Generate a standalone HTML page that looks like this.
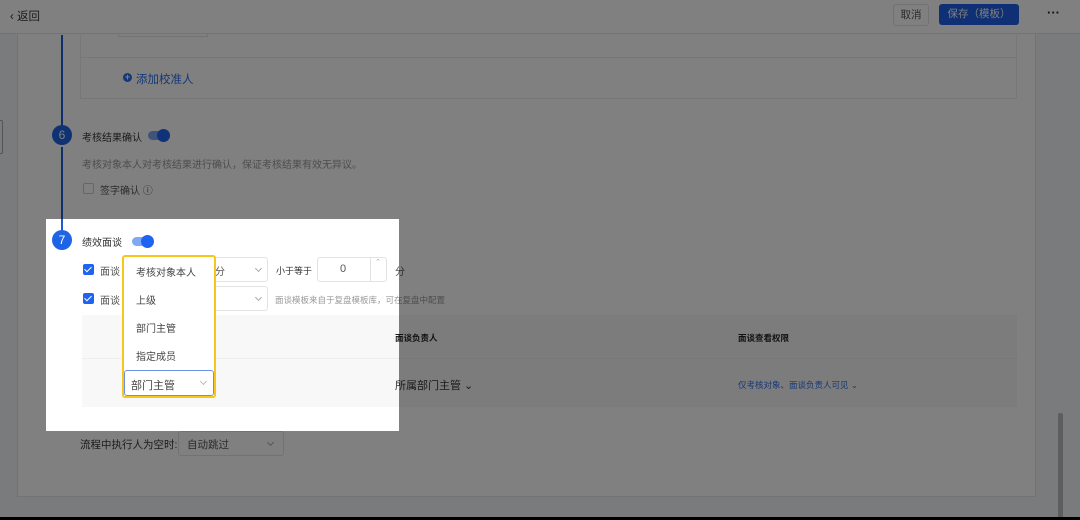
<!DOCTYPE html>
<html><head><meta charset="utf-8"><style>
*{box-sizing:border-box;margin:0;padding:0}
body{width:1080px;height:520px;overflow:hidden;background:#7a7b7c;font-family:"Liberation Sans","Noto Sans CJK SC",sans-serif;font-size:10px;position:relative;color:#1a1a1a}
.a{position:absolute;white-space:nowrap}
.chev{width:5px;height:5px;border-style:solid;border-width:0 1px 1px 0;transform:rotate(45deg)}
.tg{width:20px;height:9px;border-radius:5px}
.tg i{position:absolute;right:-2px;top:-2px;width:13px;height:13px;border-radius:50%}
.cbx{width:11px;height:11px;border-radius:2px}
.cbx:after{content:"";position:absolute;left:3px;top:1px;width:3px;height:6px;border-style:solid;border-color:inherit;border-width:0 1.5px 1.5px 0;transform:rotate(45deg)}
.circ{width:20px;height:20px;border-radius:50%;text-align:center;line-height:20px;font-size:12px}
</style></head><body>
<div class="a" style="left:0;top:0;width:1080px;height:34px;background:#808080;border-bottom:1px solid #737373"></div>
<div class="a" style="left:10px;top:8px;font-size:11.5px;color:#1a1a1a">‹ 返回</div>
<div class="a" style="left:893px;top:4px;width:36px;height:22px;border:1px solid #727272;border-radius:3px;text-align:center;line-height:20px;color:#2b2b2b;font-size:10.5px">取消</div>
<div class="a" style="left:939px;top:4px;width:80px;height:21px;background:#0f3074;border-radius:3px;color:#808080;text-align:center;line-height:21px;font-size:10.5px">保存（模板）</div>
<div class="a" style="left:1047px;top:5px;font-size:13px;font-weight:bold;color:#111">···</div>
<div class="a" style="left:17px;top:34px;width:1019px;height:463px;background:#808080;border:1px solid #737373;border-top:none"></div>
<div class="a" style="left:0;top:120px;width:3px;height:34px;border:1px solid #555;border-left:none;border-radius:0 2px 2px 0"></div>
<div class="a" style="left:1058px;top:413px;width:5px;height:107px;background:#5e5e5e;border-radius:2px"></div>
<div class="a" style="left:61px;top:35px;width:2px;height:92px;background:#0e2e6c"></div>
<div class="a" style="left:61px;top:147px;width:2px;height:72px;background:#0e2e6c"></div>
<div class="a" style="left:80px;top:35px;width:937px;height:64px;border:1px solid #777;border-top:none"></div>
<div class="a" style="left:80px;top:57px;width:937px;height:1px;background:#777"></div>
<div class="a" style="left:118px;top:34px;width:90px;height:3px;border:1px solid #727272;border-top:none"></div>
<div class="a" style="left:123px;top:73px;width:9px;height:9px;border-radius:50%;background:#153778;color:#808080;font-size:9px;line-height:9px;text-align:center;font-weight:bold">+</div>
<div class="a" style="left:136px;top:71px;color:#153778;font-size:11.5px">添加校准人</div>
<div class="a circ" style="left:52px;top:125px;background:#0f3273;color:#808080">6</div>
<div class="a" style="left:82px;top:129px">考核结果确认</div>
<div class="a tg" style="left:148px;top:131px;background:#40547b"><i style="background:#0f3278"></i></div>
<div class="a" style="left:82px;top:156px;color:#4d4d4d">考核对象本人对考核结果进行确认，保证考核结果有效无异议。</div>
<div class="a" style="left:83px;top:183px;width:11px;height:11px;border:1px solid #666;border-radius:2px"></div>
<div class="a" style="left:100px;top:182px;color:#2b2b2b">签字确认 ⓘ</div>
<div class="a" style="left:399px;top:315px;width:618px;height:92px;background:#7c7c7c"></div>
<div class="a" style="left:399px;top:358px;width:618px;height:1px;background:#777"></div>
<div class="a" style="left:738px;top:332px;font-size:8.5px;font-weight:bold;color:#111">面谈查看权限</div>
<div class="a" style="left:738px;top:379px;font-size:8.5px;color:#153778">仅考核对象、面谈负责人可见 ⌄</div>
<div class="a" style="left:80px;top:437px;color:#1a1a1a;font-size:10.5px">流程中执行人为空时:</div>
<div class="a" style="left:178px;top:431px;width:106px;height:25px;border:1px solid #727272;border-radius:3px"></div>
<div class="a" style="left:187px;top:437px;color:#2b2b2b;font-size:10.5px">自动跳过</div>
<div class="a chev" style="left:268px;top:440px;border-color:#555"></div>
<!-- dim copies of text crossing the panel edge -->
<div class="a" style="left:395px;top:263px;color:#2b2b2b">分</div>
<div class="a" style="left:275px;top:294px;color:#4d4d4d;font-size:8.5px">面谈模板来自于复盘模板库，可在复盘中配置</div>
<div class="a" style="left:395px;top:332px;font-size:8.5px;font-weight:bold;color:#111">面谈负责人</div>
<div class="a" style="left:395px;top:377px;font-size:11px;color:#1a1a1a">所属部门主管 ⌄</div>

<div class="a" style="left:46px;top:219px;width:353px;height:212px;background:#fff;overflow:hidden">
 <div class="a" style="left:-46px;top:-219px;width:1080px;height:520px;color:#333">
  <div class="a" style="left:61px;top:219px;width:2px;height:12px;background:#1c5bd8"></div>
  <div class="a circ" style="left:52px;top:230px;background:#1e64e6;color:#fff">7</div>
  <div class="a" style="left:82px;top:234px">绩效面谈</div>
  <div class="a tg" style="left:132px;top:237px;background:#7fa8f5"><i style="background:#1e64f0"></i></div>
  <div class="a cbx" style="left:83px;top:264px;background:#1e64f0;border-color:#fff"></div>
  <div class="a" style="left:100px;top:263px;color:#555">面谈</div>
  <div class="a" style="left:130px;top:257px;width:138px;height:25px;border:1px solid #e3e3e3;border-radius:3px"></div>
  <div class="a" style="left:215px;top:263px;color:#555">分</div>
  <div class="a chev" style="left:256px;top:266px;border-color:#aaa"></div>
  <div class="a" style="left:276px;top:264px;font-size:9px">小于等于</div>
  <div class="a" style="left:317px;top:257px;width:70px;height:25px;border:1px solid #e3e3e3;border-radius:3px"></div>
  <div class="a" style="left:370px;top:257px;width:1px;height:25px;background:#e3e3e3"></div>
  <div class="a" style="left:375px;top:258px;font-size:7px;color:#aaa">⌃</div>
  <div class="a" style="left:340px;top:263px;color:#555;font-size:11px">0</div>
  <div class="a" style="left:395px;top:263px;color:#555">分</div>
  <div class="a cbx" style="left:83px;top:293px;background:#1e64f0;border-color:#fff"></div>
  <div class="a" style="left:100px;top:292px;color:#555">面谈</div>
  <div class="a" style="left:130px;top:286px;width:138px;height:25px;border:1px solid #e3e3e3;border-radius:3px"></div>
  <div class="a chev" style="left:256px;top:295px;border-color:#aaa"></div>
  <div class="a" style="left:275px;top:294px;color:#999;font-size:8.5px">面谈模板来自于复盘模板库，可在复盘中配置</div>
  <div class="a" style="left:82px;top:315px;width:935px;height:92px;background:#f8f8f8"></div>
  <div class="a" style="left:82px;top:358px;width:935px;height:1px;background:#eee"></div>
  <div class="a" style="left:395px;top:332px;font-size:8.5px;font-weight:bold;color:#222">面谈负责人</div>
  <div class="a" style="left:395px;top:377px;font-size:11px;color:#333">所属部门主管 ⌄</div>
 </div>
</div>

<div class="a" style="left:0;top:517px;width:1080px;height:3px;background:#000"></div>
<div class="a" style="left:122px;top:255px;width:94px;height:143px;border:2px solid #f7c61a;border-radius:3px;background:#fff"></div>
<div class="a" style="left:136px;top:264px;color:#444">考核对象本人</div>
<div class="a" style="left:136px;top:292px;color:#444">上级</div>
<div class="a" style="left:136px;top:320px;color:#444">部门主管</div>
<div class="a" style="left:136px;top:348px;color:#444">指定成员</div>
<div class="a" style="left:124px;top:370px;width:90px;height:26px;border:1px solid #6c92e8;border-radius:3px;background:#fff"></div>
<div class="a" style="left:131px;top:377px;color:#444;font-size:11px">部门主管</div>
<div class="a chev" style="left:201px;top:379px;border-color:#bbb"></div>
</body></html>
